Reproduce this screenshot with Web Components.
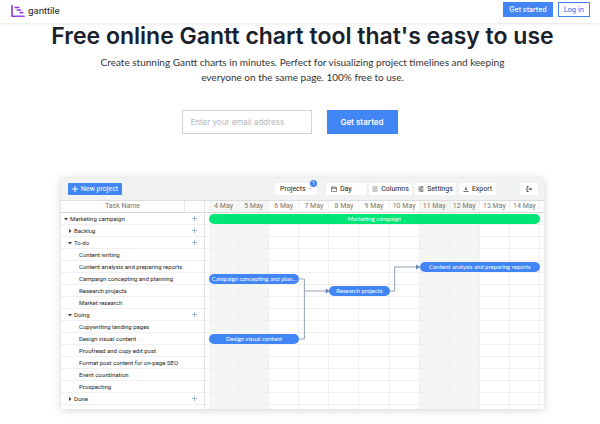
<!DOCTYPE html>
<html lang="en">
<head>
  <meta charset="utf-8">
  <meta name="viewport" content="width=device-width, initial-scale=1">
  <title>Ganttile</title>
  <style>
    body {
      margin: 0;
      background: #fff;
      color: #1a202c;
      font-family: Inter, "Liberation Sans", sans-serif;
      --blue: #4285f4;
      --green: #00e676;
      --line: #f0f0f0;
      --row: 12px;
      --head: 12px;
    }
    main {
      padding: 0 56px 16px 61px;
    }
  </style>
</head>
<body>
  <site-header></site-header>
  <main>
    <hero-intro>
      <span slot="title">Free online Gantt chart tool that's easy to use</span>
      Create stunning Gantt charts in minutes. Perfect for visualizing project timelines and keeping everyone on the same page. 100% free to use.
    </hero-intro>
    <signup-form></signup-form>
    <gantt-board></gantt-board>
  </main>

  <script>
    class SiteHeader extends HTMLElement {
      constructor() {
        super();
        this.attachShadow({ mode: 'open' });
        this.shadowRoot.innerHTML = `
          <style>
            :host {
              display: block;
              position: sticky;
              top: 0;
              z-index: 1;
              background: #fff;
              box-shadow: 0 1px 3px rgba(0, 0, 0, 0.1);
            }
            header {
              display: flex;
              align-items: center;
              justify-content: space-between;
              height: 23px;
              padding: 0 10px 0 11px;
              box-sizing: border-box;
            }
            .logo {
              display: flex;
              align-items: center;
              gap: 3px;
              padding-bottom: 1px;
              color: #333;
              font-size: 9px;
              font-weight: 500;
              line-height: 12px;
              text-decoration: none;
            }
            .logo svg {
              width: 14px;
              height: 12px;
            }
            nav {
              display: flex;
              gap: 5px;
              padding-bottom: 4px;
            }
            nav a {
              border: 1px solid var(--blue);
              padding: 0 5px;
              font-size: 7px;
              font-weight: 500;
              line-height: 13px;
              color: var(--blue);
              text-decoration: none;
            }
            nav .primary {
              background: var(--blue);
              color: #fff;
            }
          </style>
          <header>
            <a class="logo" href="#">
              <svg viewBox="0 0 14 12" fill="none" stroke-width="1.6" stroke-linecap="round" stroke-linejoin="round">
                <defs>
                  <linearGradient id="g" gradientUnits="userSpaceOnUse" x1="0" y1="0" x2="14" y2="12">
                    <stop offset="0" stop-color="#7b2fe0"></stop>
                    <stop offset="1" stop-color="#a84be8"></stop>
                  </linearGradient>
                </defs>
                <path stroke="url(#g)" d="M1 .8v10.400h12.200M4.200 2.500h3.600M6.200 5h3.400M9 7.600h2.800"></path>
              </svg>
              <span>ganttile</span>
            </a>
            <nav>
              <a class="primary" href="#">Get started</a>
              <a href="#">Log in</a>
            </nav>
          </header>
        `;
      }
    }

    class HeroIntro extends HTMLElement {
      constructor() {
        super();
        this.attachShadow({ mode: 'open' });
        this.shadowRoot.innerHTML = `
          <style>
            :host {
              display: block;
              text-align: center;
            }
            h1 {
              margin: 0 -20px;
              font-size: 23px;
              font-weight: 600;
              line-height: 26px;
            }
            p {
              max-width: 430px;
              margin: 6px auto 0;
              font-family: Lato, "Liberation Sans", sans-serif;
              font-size: 10px;
              line-height: 15px;
              color: #333;
            }
          </style>
          <h1><slot name="title"></slot></h1>
          <p><slot></slot></p>
        `;
      }
    }

    class SignupForm extends HTMLElement {
      constructor() {
        super();
        this.attachShadow({ mode: 'open' });
        this.shadowRoot.innerHTML = `
          <style>
            :host {
              display: block;
              padding: 25px 26px 44px 0;
            }
            form {
              display: flex;
              justify-content: center;
              gap: 15px;
            }
            input, button {
              box-sizing: border-box;
              height: 24px;
              font-family: inherit;
              font-size: 8px;
              border-radius: 0;
            }
            input {
              width: 130px;
              padding: 0 8px;
              border: 1px solid #cfd4d9;
            }
            input::placeholder {
              color: #b4b9be;
            }
            button {
              width: 71px;
              padding: 0;
              border: 0;
              background: var(--blue);
              color: #fff;
              font-weight: 600;
            }
          </style>
          <form>
            <input type="email" aria-label="Email address" placeholder="Enter your email address">
            <button type="button">Get started</button>
          </form>
        `;
      }
    }

    class ToolButton extends HTMLElement {
      constructor() {
        super();
        this.attachShadow({ mode: 'open' });
        this.shadowRoot.innerHTML = `
          <style>
            :host {
              display: block;
            }
            button {
              display: flex;
              align-items: center;
              justify-content: center;
              gap: 3px;
              width: 100%;
              height: 12px;
              padding: 0;
              border: 0;
              border-radius: 1px;
              background: #fff;
              color: #222;
              font-family: inherit;
              font-size: 7px;
              line-height: 12px;
              white-space: nowrap;
            }
            :host([primary]) button {
              background: var(--blue);
              color: #fff;
            }
            :host([align="start"]) button {
              justify-content: flex-start;
              padding-left: 5px;
            }
          </style>
          <button type="button"><slot name="icon"></slot><slot></slot></button>
        `;
        const label = this.getAttribute('label');
        if (label) this.shadowRoot.querySelector('button').setAttribute('aria-label', label);
      }
    }

    class GanttToolbar extends HTMLElement {
      constructor() {
        super();
        this.attachShadow({ mode: 'open' });
        this.shadowRoot.innerHTML = `
          <style>
            :host {
              display: flex;
              align-items: center;
              gap: 3px;
              height: 22px;
              padding: 0 6px 0 7px;
              background: #f1f3f3;
              border-bottom: 1px solid #dcdede;
            }
            svg {
              width: 6px;
              height: 6px;
              fill: none;
              stroke: currentColor;
              stroke-width: 1;
            }
            .spacer {
              flex: 1;
            }
            .new { width: 54px; }
            .day { width: 40px; }
            .columns { width: 43px; }
            .settings { width: 41px; }
            .export { width: 37px; margin-right: 21px; }
            .exit { width: 18px; }
            .projects {
              position: relative;
              width: 42px;
              margin-right: 6px;
            }
            select {
              display: block;
              appearance: none;
              box-sizing: border-box;
              width: 100%;
              height: 12px;
              padding: 0 5px;
              border: 0;
              border-radius: 1px;
              background: #fff;
              color: #222;
              font-family: inherit;
              font-size: 7px;
            }
            .caret {
              position: absolute;
              right: 6px;
              top: 5px;
              border: 1px solid transparent;
              border-top-color: #888;
            }
            .badge {
              position: absolute;
              right: 0;
              top: -3px;
              width: 7px;
              height: 7px;
              border-radius: 50%;
              background: var(--blue);
              color: #fff;
              font-size: 5px;
              line-height: 7px;
              text-align: center;
            }
          </style>
          <tool-button class="new" primary>
            <svg slot="icon" viewBox="0 0 6 6"><path d="M3 0v6M0 3h6"></path></svg>New project
          </tool-button>
          <div class="spacer"></div>
          <div class="projects">
            <select aria-label="Projects"><option>Projects</option></select>
            <span class="caret"></span>
            <span class="badge">1</span>
          </div>
          <tool-button class="day" align="start">
            <svg slot="icon" viewBox="0 0 12 12"><path d="M1 2.500h10v8.500H1zM1 5h10M3.500 .5v2M8.500 .5v2"></path></svg>Day
          </tool-button>
          <tool-button class="columns">
            <svg slot="icon" viewBox="0 0 12 12"><path d="M1 2h10M1 6h10M1 10h10"></path></svg>Columns
          </tool-button>
          <tool-button class="settings">
            <svg slot="icon" viewBox="0 0 12 12"><path d="M1 2h10M1 6h10M1 10h10M8 .5v3M4 4.500v3M8 8.500v3" stroke-width="1.300"></path></svg>Settings
          </tool-button>
          <tool-button class="export">
            <svg slot="icon" viewBox="0 0 12 12"><path d="M6 1v7M3.500 5.500L6 8l2.500-2.500M1 11h10" stroke-width="1.300"></path></svg>Export
          </tool-button>
          <tool-button class="exit" label="Exit">
            <svg slot="icon" viewBox="0 0 12 12"><path d="M5 1H2v10h3M5 6h6M8.500 3.500L11 6 8.500 8.500" stroke-width="1.600"></path></svg>
          </tool-button>
        `;
      }
    }

    const tasks = [
      { name: 'Marketing campaign', level: 0, open: true },
      { name: 'Backlog', level: 1, open: false },
      { name: 'To-do', level: 1, open: true },
      { name: 'Content writing', level: 2 },
      { name: 'Content analysis and preparing reports', level: 2 },
      { name: 'Campaign concepting and planning', level: 2 },
      { name: 'Research projects', level: 2 },
      { name: 'Market research', level: 2 },
      { name: 'Doing', level: 1, open: true },
      { name: 'Copywriting landing pages', level: 2 },
      { name: 'Design visual content', level: 2 },
      { name: 'Proofread and copy edit post', level: 2 },
      { name: 'Format post content for on-page SEO', level: 2 },
      { name: 'Event coordination', level: 2 },
      { name: 'Prospecting', level: 2 },
      { name: 'Done', level: 1, open: false }
    ];

    class TaskList extends HTMLElement {
      constructor() {
        super();
        this.attachShadow({ mode: 'open' });
        this.shadowRoot.innerHTML = `
          <style>
            :host {
              display: block;
              border-right: 1px solid #e4e4e4;
            }
            table {
              width: 100%;
              table-layout: fixed;
              border-collapse: separate;
              border-spacing: 0;
              font-size: 6px;
              color: #222;
            }
            th, td {
              box-sizing: border-box;
              height: var(--row);
              padding: 0;
              border-bottom: 1px solid var(--line);
              line-height: 11px;
              white-space: nowrap;
            }
            th {
              height: var(--head);
              border-bottom-color: #d8d8d8;
              border-right: 1px solid #e4e4e4;
              color: #777;
              font-size: 7px;
              font-weight: 400;
            }
            th:last-child {
              width: 19px;
              border-right: 0;
            }
            .cell {
              display: flex;
              align-items: center;
              gap: 2px;
              height: 11px;
            }
            .l0 { padding-left: 3px; }
            .l1 { padding-left: 7px; }
            .l2 { padding-left: 18px; }
            button {
              display: block;
              padding: 0;
              border: 0;
              background: none;
              line-height: 0;
            }
            .toggle svg {
              width: 4px;
              height: 4px;
              fill: #444;
            }
            .toggle.open svg {
              transform: rotate(90deg);
            }
            .add {
              margin: 0 auto;
            }
            .add svg {
              width: 5px;
              height: 5px;
              stroke: #7fa8d0;
              stroke-width: 0.8;
            }
          </style>
          <table>
            <thead>
              <tr><th scope="col">Task Name</th><th></th></tr>
            </thead>
            <tbody>
              ${tasks.map((task) => this.renderRow(task)).join('')}
            </tbody>
          </table>
        `;
      }

      renderRow({ name, level, open }) {
        const group = open !== undefined;
        const toggle = group
          ? `<button type="button" class="toggle ${open ? 'open' : ''}" aria-label="Toggle ${name}"><svg viewBox="0 0 4 4"><path d="M1 0l2.500 2L1 4z"></path></svg></button>`
          : '';
        const add = group
          ? `<button type="button" class="add" aria-label="Add to ${name}"><svg viewBox="0 0 5 5"><path d="M2.500 0v5M0 2.500h5"></path></svg></button>`
          : '';
        return `<tr><td><div class="cell l${level}">${toggle}<span>${name}</span></div></td><td>${add}</td></tr>`;
      }
    }

    class GanttBar extends HTMLElement {
      constructor() {
        super();
        this.attachShadow({ mode: 'open' });
        this.shadowRoot.innerHTML = `
          <style>
            :host {
              display: block;
              height: 10px;
              box-sizing: border-box;
              padding: 0 2px;
              border-radius: 5px;
              background: var(--blue);
              color: #fff;
              font-family: Lato, "Liberation Sans", sans-serif;
              font-size: 6px;
              line-height: 10px;
              text-align: center;
              white-space: nowrap;
            }
            :host([summary]) {
              background: var(--green);
            }
          </style>
          <slot></slot>
        `;
      }

      connectedCallback() {
        // row counts from 1, from/to are day lines
        this.style.gridRow = this.getAttribute('row');
        this.style.gridColumn = `${this.getAttribute('from')} / ${this.getAttribute('to')}`;
      }
    }

    class GanttTimeline extends HTMLElement {
      constructor() {
        super();
        this.attachShadow({ mode: 'open' });
        const days = Array.from({ length: 11 }, (_, i) => i + 4);
        const weekend = (day) => [4, 5, 11, 12].includes(day) ? 'weekend' : '';
        this.shadowRoot.innerHTML = `
          <style>
            :host {
              display: flex;
              flex-direction: column;
              min-width: 0;
            }
            .days, .chart {
              display: grid;
              grid-template-columns: repeat(11, minmax(0, 1fr));
              padding: 0 4px;
            }
            .days {
              height: var(--head);
              box-sizing: border-box;
              border-bottom: 1px solid #d8d8d8;
              color: #777;
              font-size: 7px;
              line-height: 11px;
              text-align: center;
            }
            .days span, .column {
              border-right: 1px solid var(--line);
            }
            .weekend {
              background: #f4f6f4;
            }
            .chart {
              flex: 1;
              grid-template-rows: repeat(16, var(--row)) 1fr;
              align-items: center;
            }
            .column {
              grid-row: 1 / -1;
              align-self: stretch;
            }
            .line {
              grid-column: 1 / -1;
              align-self: end;
              margin: 0 -4px;
              border-bottom: 1px solid var(--line);
            }
            svg {
              grid-row: 1 / 17;
              grid-column: 1 / -1;
              width: 100%;
              height: 100%;
            }
            svg .link {
              fill: none;
              stroke: #93a3b5;
              stroke-width: 1;
              vector-effect: non-scaling-stroke;
            }
            svg .tip {
              fill: #6b87ad;
            }
          </style>
          <div class="days">
            ${days.map((day) => `<span class="${weekend(day)}">${day} May</span>`).join('')}
          </div>
          <div class="chart">
            ${days.map((day, i) => `<div class="column ${weekend(day)}" style="grid-column: ${i + 1}"></div>`).join('')}
            ${tasks.map((_, i) => `<div class="line" style="grid-row: ${i + 1}"></div>`).join('')}
            <svg viewBox="0 0 11 16" preserveAspectRatio="none">
              <path class="link" d="M3 5.500H3.170V10.500H3M3.170 6.500H3.900M6 6.500H6.170V4.500H6.900"></path>
              <path class="tip" d="M3.880 6.300L4.020 6.500L3.880 6.700zM6.880 4.300L7.020 4.500L6.880 4.700z"></path>
            </svg>
            <gantt-bar row="1" from="1" to="12" summary>Marketing campaign</gantt-bar>
            <gantt-bar row="5" from="8" to="12">Content analysis and preparing reports</gantt-bar>
            <gantt-bar row="6" from="1" to="4">Campaign concepting and plan...</gantt-bar>
            <gantt-bar row="7" from="5" to="7">Research projects</gantt-bar>
            <gantt-bar row="11" from="1" to="4">Design visual content</gantt-bar>
          </div>
        `;
      }
    }

    class GanttBoard extends HTMLElement {
      constructor() {
        super();
        this.attachShadow({ mode: 'open' });
        this.shadowRoot.innerHTML = `
          <style>
            :host {
              display: block;
              background: #fff;
              border-radius: 2px;
              box-shadow: 0 1px 8px rgba(0, 0, 0, 0.18);
              font-family: Roboto, "Liberation Sans", sans-serif;
              overflow: hidden;
            }
            .body {
              display: grid;
              grid-template-columns: 144px minmax(0, 1fr);
            }
            task-list {
              padding-bottom: 4px;
            }
          </style>
          <gantt-toolbar></gantt-toolbar>
          <div class="body">
            <task-list></task-list>
            <gantt-timeline></gantt-timeline>
          </div>
        `;
      }
    }

    customElements.define('site-header', SiteHeader);
    customElements.define('hero-intro', HeroIntro);
    customElements.define('signup-form', SignupForm);
    customElements.define('tool-button', ToolButton);
    customElements.define('gantt-toolbar', GanttToolbar);
    customElements.define('task-list', TaskList);
    customElements.define('gantt-bar', GanttBar);
    customElements.define('gantt-timeline', GanttTimeline);
    customElements.define('gantt-board', GanttBoard);
  </script>
</body>
</html>
